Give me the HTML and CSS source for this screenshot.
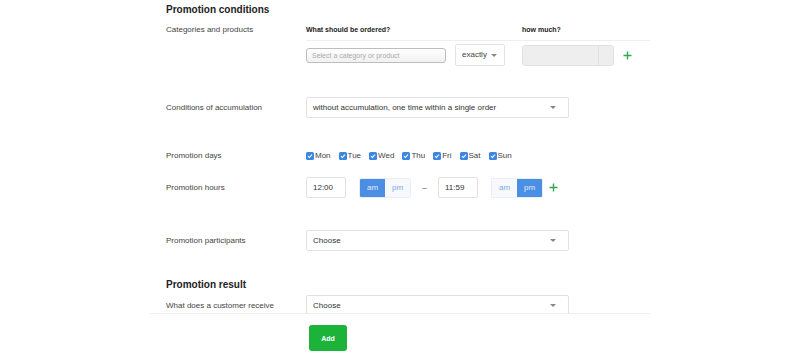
FILE: index.html
```html
<!DOCTYPE html>
<html lang="en">
  <head>
    <meta charset="UTF-8" />
    <meta name="viewport" content="width=device-width, initial-scale=1" />
    <title>Promotion conditions</title>
    <link rel="stylesheet" href="styles.css">
  </head>
  <body>
    <div class="page">
      <div class="content">
        <h2 class="section-title">Promotion conditions</h2>

        <div class="row row-products">
          <div class="label">Categories and products</div>
          <div class="field">
            <div class="col-heads">
              <span class="col-what">What should be ordered?</span>
              <span class="col-much">how much?</span>
            </div>
            <div class="product-line">
              <div class="product-select">Select a category or product</div>
              <div class="small-select">exactly <span class="caret"></span></div>
              <div class="amount">
                <span class="amount-value"></span>
                <span class="amount-unit"></span>
              </div>
              <button class="plus" aria-label="Add product">
                <svg width="9" height="9" viewBox="0 0 9 9"><path d="M4.5 0.5v8M0.5 4.5h8" stroke="#2fa84f" stroke-width="1.4" /></svg>
              </button>
            </div>
          </div>
        </div>

        <div class="row row-accum">
          <div class="label">Conditions of accumulation</div>
          <div class="field">
            <div class="select wide">without accumulation, one time within a single order <span class="caret"></span></div>
          </div>
        </div>

        <div class="row row-days">
          <div class="label">Promotion days</div>
          <div class="field days">
            <label class="day"><span class="check"><svg width="6" height="6" viewBox="0 0 6 6"><path d="M1 3.2l1.3 1.3L5 1.6" fill="none" stroke="#fff" stroke-width="1.1" /></svg></span>Mon</label>
            <label class="day"><span class="check"><svg width="6" height="6" viewBox="0 0 6 6"><path d="M1 3.2l1.3 1.3L5 1.6" fill="none" stroke="#fff" stroke-width="1.1" /></svg></span>Tue</label>
            <label class="day"><span class="check"><svg width="6" height="6" viewBox="0 0 6 6"><path d="M1 3.2l1.3 1.3L5 1.6" fill="none" stroke="#fff" stroke-width="1.1" /></svg></span>Wed</label>
            <label class="day"><span class="check"><svg width="6" height="6" viewBox="0 0 6 6"><path d="M1 3.2l1.3 1.3L5 1.6" fill="none" stroke="#fff" stroke-width="1.1" /></svg></span>Thu</label>
            <label class="day"><span class="check"><svg width="6" height="6" viewBox="0 0 6 6"><path d="M1 3.2l1.3 1.3L5 1.6" fill="none" stroke="#fff" stroke-width="1.1" /></svg></span>Fri</label>
            <label class="day"><span class="check"><svg width="6" height="6" viewBox="0 0 6 6"><path d="M1 3.2l1.3 1.3L5 1.6" fill="none" stroke="#fff" stroke-width="1.1" /></svg></span>Sat</label>
            <label class="day"><span class="check"><svg width="6" height="6" viewBox="0 0 6 6"><path d="M1 3.2l1.3 1.3L5 1.6" fill="none" stroke="#fff" stroke-width="1.1" /></svg></span>Sun</label>
          </div>
        </div>

        <div class="row row-hours">
          <div class="label">Promotion hours</div>
          <div class="field hours">
            <div class="time">12:00</div>
            <div class="ampm">
              <span class="seg active">am</span>
              <span class="seg">pm</span>
            </div>
            <span class="dash">–</span>
            <div class="time">11:59</div>
            <div class="ampm">
              <span class="seg">am</span>
              <span class="seg active">pm</span>
            </div>
            <button class="plus" aria-label="Add hours">
              <svg width="9" height="9" viewBox="0 0 9 9"><path d="M4.5 0.5v8M0.5 4.5h8" stroke="#2fa84f" stroke-width="1.4" /></svg>
            </button>
          </div>
        </div>

        <div class="row row-participants">
          <div class="label">Promotion participants</div>
          <div class="field">
            <div class="select wide">Choose <span class="caret"></span></div>
          </div>
        </div>

        <h2 class="section-title result-title">Promotion result</h2>

        <div class="row row-receive">
          <div class="label">What does a customer receive</div>
          <div class="field">
            <div class="select wide">Choose <span class="caret"></span></div>
          </div>
        </div>
      </div>

      <div class="footer">
        <button class="add-btn">Add</button>
      </div>
    </div>
  </body>
</html>
```

FILE: styles.css
```css
* {
  box-sizing: border-box;
}

html,
body {
  margin: 0;
  height: 100%;
  background: #fff;
}

body {
  font-family: 'Liberation Sans', Arial, sans-serif;
  color: #333;
}

.page {
  width: 500px;
  height: 100vh;
  margin: 0 auto;
  display: flex;
  flex-direction: column;
}

.content {
  flex: 1;
  overflow: hidden;
  padding: 4px 0 0 16px;
}

.section-title {
  margin: 0;
  font-size: 10px;
  line-height: 12px;
  font-weight: bold;
  color: #222;
}

.result-title {
  margin-top: 28px;
}

.row {
  display: flex;
  align-items: center;
}

.label {
  width: 140px;
  flex-shrink: 0;
  font-size: 8px;
  line-height: 10px;
  color: #444;
}

.field {
  flex: 1;
}

/* kategorie a produkty */
.row-products {
  margin-top: 9px;
  align-items: flex-start;
}

.col-heads {
  display: flex;
  font-size: 7px;
  line-height: 10px;
  font-weight: bold;
  color: #222;
  padding-bottom: 5px;
  border-bottom: 1px solid #eee;
}

.col-what {
  width: 216px;
}

.product-line {
  display: flex;
  align-items: center;
  margin-top: 3px;
  height: 22px;
}

.product-select {
  width: 140px;
  height: 15px;
  border: 1px solid #bdbdbd;
  border-radius: 3px;
  background: linear-gradient(#fff, #f1f1f1);
  font-size: 7px;
  line-height: 13px;
  padding-left: 5px;
  color: #aaa;
}

.small-select {
  width: 50px;
  height: 22px;
  margin-left: 9px;
  border: 1px solid #e3e3e3;
  border-radius: 2px;
  font-size: 8px;
  line-height: 20px;
  padding-left: 6px;
  color: #444;
  display: flex;
  align-items: center;
  gap: 4px;
}

.amount {
  width: 92px;
  height: 21px;
  margin-left: 17px;
  display: flex;
  border: 1px solid #e2e2e2;
  border-radius: 3px;
  background: #eee;
}

.amount-value {
  flex: 1;
  border-right: 1px solid #e0e0e0;
}

.amount-unit {
  width: 14px;
}

.plus {
  border: none;
  background: none;
  padding: 0;
  margin-left: 9px;
  display: flex;
  cursor: pointer;
}

/* select */
.select {
  height: 21px;
  border: 1px solid #e1e1e1;
  border-radius: 2px;
  font-size: 8px;
  padding: 0 12px 0 6px;
  display: flex;
  align-items: center;
  justify-content: space-between;
  color: #333;
  background: #fff;
}

.select.wide {
  width: 263px;
}

.caret {
  width: 0;
  height: 0;
  border-left: 3px solid transparent;
  border-right: 3px solid transparent;
  border-top: 3px solid #888;
}

.row-accum {
  margin-top: 31px;
}

/* dny */
.row-days {
  margin-top: 33px;
}

.days {
  display: flex;
  gap: 8px;
  font-size: 8px;
  line-height: 10px;
  color: #444;
}

.day {
  display: flex;
  align-items: center;
}

.check {
  width: 8px;
  height: 8px;
  margin-right: 1px;
  border-radius: 1.5px;
  background: #3d87e2;
  display: flex;
  align-items: center;
  justify-content: center;
}

/* hodiny */
.row-hours {
  margin-top: 16px;
}

.hours {
  display: flex;
  align-items: center;
}

.time {
  width: 40px;
  height: 21px;
  border: 1px solid #e1e1e1;
  border-radius: 2px;
  font-size: 8px;
  line-height: 19px;
  padding-left: 6px;
  color: #333;
}

.ampm {
  display: flex;
  height: 20px;
  margin-left: 13px;
  border: 1px solid #eaeef3;
  border-radius: 2px;
  overflow: hidden;
}

.seg {
  width: 25px;
  font-size: 8px;
  line-height: 18px;
  text-align: center;
  color: #7ea9e3;
  background: #f6f8fb;
}

.seg.active {
  background: #4a8fe3;
  color: #e3eefb;
}

.dash {
  width: 27px;
  text-align: center;
  font-size: 9px;
  color: #777;
}

.hours .plus {
  margin-left: 6px;
}

.row-participants {
  margin-top: 32px;
}

.row-receive {
  margin-top: 4px;
}

/* spodní lišta */
.footer {
  height: 44px;
  flex-shrink: 0;
  border-top: 1px solid #eee;
  background: #fff;
  padding: 11px 0 0 159px;
}

.add-btn {
  width: 38px;
  height: 26px;
  border: none;
  border-radius: 3px;
  background: #1cb33b;
  color: #fff;
  font-family: 'Liberation Sans', Arial, sans-serif;
  font-size: 7px;
  font-weight: bold;
  padding: 0;
  cursor: pointer;
}
```
